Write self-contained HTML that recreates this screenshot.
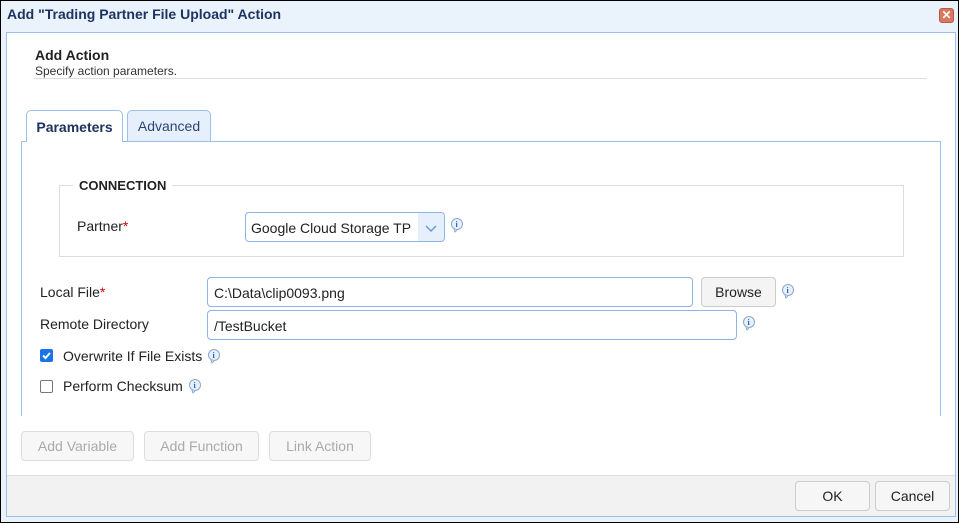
<!DOCTYPE html><html><head><style>
*{box-sizing:border-box;margin:0;padding:0}
body{width:959px;height:523px;position:relative;font-family:"Liberation Sans",sans-serif;font-size:14px;color:#222;background:#eaf2fc;overflow:hidden}
.a{position:absolute}
.inp{position:absolute;border:1px solid #8fb3e3;border-radius:4px;background:#fff;height:30px;padding:7px 6px;font-size:14px;color:#222}
.btn{position:absolute;border:1px solid #ccc;border-radius:4px;background:#f4f4f4;height:30px;text-align:center;line-height:28px;font-size:14px}
.dis{color:#aaa;background:#f7f7f7;border-color:#ddd}
.info{position:absolute;width:15px;height:15px}
</style></head><body>
<div class="a" style="left:0;top:0;width:959px;height:523px;border:1px solid #000"></div>
<div class="a" style="left:7px;top:6px;font-weight:bold;color:#1d3460;font-size:14px">Add "Trading Partner File Upload" Action</div>
<div class="a" style="left:939px;top:8px;width:15px;height:15px;background:#d9785a;border:1px solid #b55;border-radius:3px;color:#fff;font-size:12px;line-height:13px;text-align:center;font-weight:bold">✕</div>
<div class="a" style="left:6px;top:32px;width:950px;height:485px;border:1px solid #9cc0ea;background:#fff"></div>
<div class="a" style="left:35px;top:47px;font-weight:bold;font-size:14px">Add Action</div>
<div class="a" style="left:35px;top:64px;font-size:12px;color:#333">Specify action parameters.</div>
<div class="a" style="left:34px;top:78px;width:893px;border-top:1px solid #ddd"></div>
<div class="a" style="left:21px;top:141px;width:920px;height:275px;border:1px solid #9cc0ea;border-bottom:none;background:#fff"></div>
<div class="a" style="left:26px;top:110px;width:97px;height:32px;border:1px solid #9cc0ea;border-bottom:none;border-radius:5px 5px 0 0;background:#fff;font-weight:bold;color:#1d3460;text-align:center;line-height:32px">Parameters</div>
<div class="a" style="left:127px;top:110px;width:84px;height:31px;border:1px solid #9cc0ea;border-bottom:none;border-radius:5px 5px 0 0;background:#e6f0fc;color:#2d4470;text-align:center;line-height:31px">Advanced</div>
<div class="a" style="left:59px;top:185px;width:845px;height:72px;border:1px solid #ddd"></div>
<div class="a" style="left:73px;top:178px;background:#fff;padding:0 6px;font-weight:bold;font-size:13px">CONNECTION</div>
<div class="a" style="left:77px;top:218px">Partner<span style="color:#c00">*</span></div>
<div class="inp" style="left:245px;top:212px;width:200px;padding-left:5px">Google Cloud Storage TP</div>
<div class="a" style="left:418px;top:213px;width:26px;height:28px;background:#e6f0fc;border-radius:0 3px 3px 0"><svg width="26" height="28"><path d="M8 13l5 5 5-5" stroke="#6a9ad6" stroke-width="1.5" fill="none"/></svg></div>
<div class="a" style="left:40px;top:284px">Local File<span style="color:#c00">*</span></div>
<div class="inp" style="left:207px;top:277px;width:486px">C:\Data\clip0093.png</div>
<div class="btn" style="left:701px;top:277px;width:75px">Browse</div>
<div class="a" style="left:40px;top:316px">Remote Directory</div>
<div class="inp" style="left:207px;top:310px;width:530px">/TestBucket</div>
<div class="a" style="left:40px;top:349px;width:13px;height:13px;background:#1a73e8;border-radius:2px"><svg width="13" height="13"><path d="M3 6.5l2.5 2.5 4.5-5" stroke="#fff" stroke-width="2" fill="none"/></svg></div>
<div class="a" style="left:63px;top:348px">Overwrite If File Exists</div>
<div class="a" style="left:40px;top:380px;width:13px;height:13px;border:1px solid #777;border-radius:2px"></div>
<div class="a" style="left:63px;top:378px">Perform Checksum</div>
<div class="btn dis" style="left:21px;top:431px;width:113px">Add Variable</div>
<div class="btn dis" style="left:144px;top:431px;width:115px">Add Function</div>
<div class="btn dis" style="left:269px;top:431px;width:102px">Link Action</div>
<div class="a" style="left:7px;top:475px;width:948px;height:41px;background:#f2f2f2;border-top:1px solid #ddd"></div>
<div class="btn" style="left:795px;top:481px;width:75px;background:#f6f6f6">OK</div>
<div class="btn" style="left:875px;top:481px;width:75px;background:#f6f6f6">Cancel</div>
<svg class="info" style="left:450px;top:218px"><circle cx="7" cy="6" r="5.5" fill="#e8f0fb" stroke="#8aa8cc"/><path d="M4 11l1 3 2-2" fill="#e8f0fb" stroke="#8aa8cc"/><text x="5.5" y="9" font-size="8" font-weight="bold" fill="#1a5fc8" font-family="Liberation Serif">i</text></svg>
<svg class="info" style="left:781px;top:284px"><circle cx="7" cy="6" r="5.5" fill="#e8f0fb" stroke="#8aa8cc"/><path d="M4 11l1 3 2-2" fill="#e8f0fb" stroke="#8aa8cc"/><text x="5.5" y="9" font-size="8" font-weight="bold" fill="#1a5fc8" font-family="Liberation Serif">i</text></svg>
<svg class="info" style="left:742px;top:316px"><circle cx="7" cy="6" r="5.5" fill="#e8f0fb" stroke="#8aa8cc"/><path d="M4 11l1 3 2-2" fill="#e8f0fb" stroke="#8aa8cc"/><text x="5.5" y="9" font-size="8" font-weight="bold" fill="#1a5fc8" font-family="Liberation Serif">i</text></svg>
<svg class="info" style="left:207px;top:349px"><circle cx="7" cy="6" r="5.5" fill="#e8f0fb" stroke="#8aa8cc"/><path d="M4 11l1 3 2-2" fill="#e8f0fb" stroke="#8aa8cc"/><text x="5.5" y="9" font-size="8" font-weight="bold" fill="#1a5fc8" font-family="Liberation Serif">i</text></svg>
<svg class="info" style="left:188px;top:379px"><circle cx="7" cy="6" r="5.5" fill="#e8f0fb" stroke="#8aa8cc"/><path d="M4 11l1 3 2-2" fill="#e8f0fb" stroke="#8aa8cc"/><text x="5.5" y="9" font-size="8" font-weight="bold" fill="#1a5fc8" font-family="Liberation Serif">i</text></svg>
</body></html>
